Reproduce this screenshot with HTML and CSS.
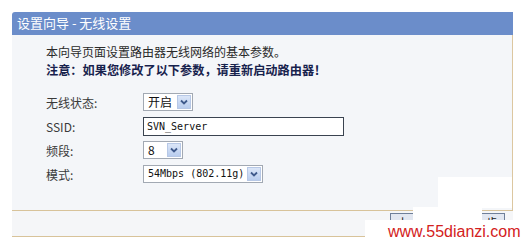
FILE: index.html
```html
<!DOCTYPE html>
<html lang="zh-CN">
<head>
  <meta charset="UTF-8" />
  <title>设置向导 - 无线设置</title>
  <link rel="stylesheet" href="styles.css">
</head>
<body>
  <div class="wizard">
    <!-- title bar -->
    <div class="head">设置向导 - 无线设置</div>

    <!-- main panel -->
    <div class="panel">
      <p class="intro">本向导页面设置路由器无线网络的基本参数。</p>
      <p class="note">注意：如果您修改了以下参数，请重新启动路由器！</p>

      <div class="form">
        <div class="label">无线状态:</div>
        <div class="sel w50"><span class="val">开启</span><span class="arrow"><svg width="8" height="6" viewBox="0 0 8 6"><path d="M1 1.5 L4 4.5 L7 1.5" fill="none" stroke="#3f5a8c" stroke-width="1.8"/></svg></span></div>

        <div class="label">SSID:</div>
        <div class="field">SVN_Server</div>

        <div class="label">频段:</div>
        <div class="sel w40"><span class="val">8</span><span class="arrow"><svg width="8" height="6" viewBox="0 0 8 6"><path d="M1 1.5 L4 4.5 L7 1.5" fill="none" stroke="#3f5a8c" stroke-width="1.8"/></svg></span></div>

        <div class="label">模式:</div>
        <div class="sel w120"><span class="val mono">54Mbps (802.11g)</span><span class="arrow"><svg width="8" height="6" viewBox="0 0 8 6"><path d="M1 1.5 L4 4.5 L7 1.5" fill="none" stroke="#3f5a8c" stroke-width="1.8"/></svg></span></div>
      </div>
    </div>

    <!-- button bar -->
    <div class="bar">
      <button class="btn">上一步</button>
      <button class="btn">下一步</button>
    </div>
  </div>

  <!-- watermark patches -->
  <div class="wm wm1"></div>
  <div class="wm wm2"></div>
  <div class="wm wm3">www.55dianzi.com</div>
</body>
</html>
```

FILE: styles.css
```css
body {
  margin: 0;
  background: #fff;
  font-family: "Noto Sans CJK SC", "Liberation Sans", sans-serif;
  position: relative;
  height: 243px;
  overflow: hidden;
}
.wizard {
  margin: 12px 0 0 12px;
  width: 501px;
}
.head {
  height: 23px;
  line-height: 22px;
  padding-left: 5px;
  background: #6b8dca;
  color: #fff;
  font-size: 13px;
  border-top-left-radius: 3px;
}
.panel {
  height: 175px;
  box-sizing: border-box;
  padding: 7px 0 0 34px;
  background: #f4f6f9;
  border-right: 1px solid #dcc7a0;
}
.intro,
.note {
  margin: 0;
  line-height: 19px;
  font-size: 12px;
  color: #2a2a2a;
}
.note {
  font-weight: bold;
  font-size: 12.2px;
  color: #17224d;
}
.form {
  margin-top: 10px;
  display: grid;
  grid-template-columns: 97px auto;
  grid-auto-rows: 24px;
  align-items: center;
  justify-items: start;
}
.label {
  font-size: 12px;
  color: #3a3a3a;
}
.sel {
  height: 18px;
  box-sizing: border-box;
  border: 1px solid #a2a9b3;
  background: #fff;
  display: flex;
  align-items: center;
  justify-content: space-between;
  padding: 0 1px 0 4px;
  font-size: 12px;
  color: #111;
}
.w50 { width: 50px; }
.w40 { width: 40px; }
.w120 { width: 120px; }
.val { line-height: 16px; }
.mono {
  font-family: "DejaVu Sans Mono", monospace;
  font-size: 10px;
}
.arrow {
  width: 14px;
  height: 14px;
  box-sizing: border-box;
  border: 1px solid #b7c8e6;
  background: linear-gradient(#dbe6f8, #b9cdee);
  display: flex;
  align-items: center;
  justify-content: center;
}
.field {
  width: 201px;
  height: 19px;
  box-sizing: border-box;
  border: 1px solid #3a4350;
  background: #fff;
  padding-left: 3px;
  font-family: "DejaVu Sans Mono", monospace;
  font-size: 10px;
  line-height: 17px;
  color: #111;
}
.bar {
  border-top: 1px solid #d8c39a;
  border-bottom: 1px solid #d8c39a;
  background: #f5f6f8;
  display: flex;
  justify-content: flex-end;
  align-items: flex-start;
  gap: 15px;
  padding: 2px 8px 0 0;
  height: 23px;
}
.btn {
  width: 50px;
  height: 20px;
  border: 1px solid #6f7f99;
  background: #e2e7f1;
  font-family: "Noto Sans CJK SC", sans-serif;
  font-size: 12px;
  line-height: 12px;
  padding: 0;
  color: #222;
}
.wm {
  position: absolute;
  background: #fff;
}
.wm1 { left: 438px; top: 177px; width: 74px; height: 31px; }
.wm2 { left: 413px; top: 207px; width: 69px; height: 14px; }
.wm3 {
  left: 365px;
  top: 220px;
  width: 158px;
  height: 23px;
  font-family: "Liberation Sans", Arial, sans-serif;
  font-size: 16px;
  line-height: 20px;
  color: #d32121;
  padding-left: 23px;
  box-sizing: border-box;
  padding-top: 2px;
}
```
